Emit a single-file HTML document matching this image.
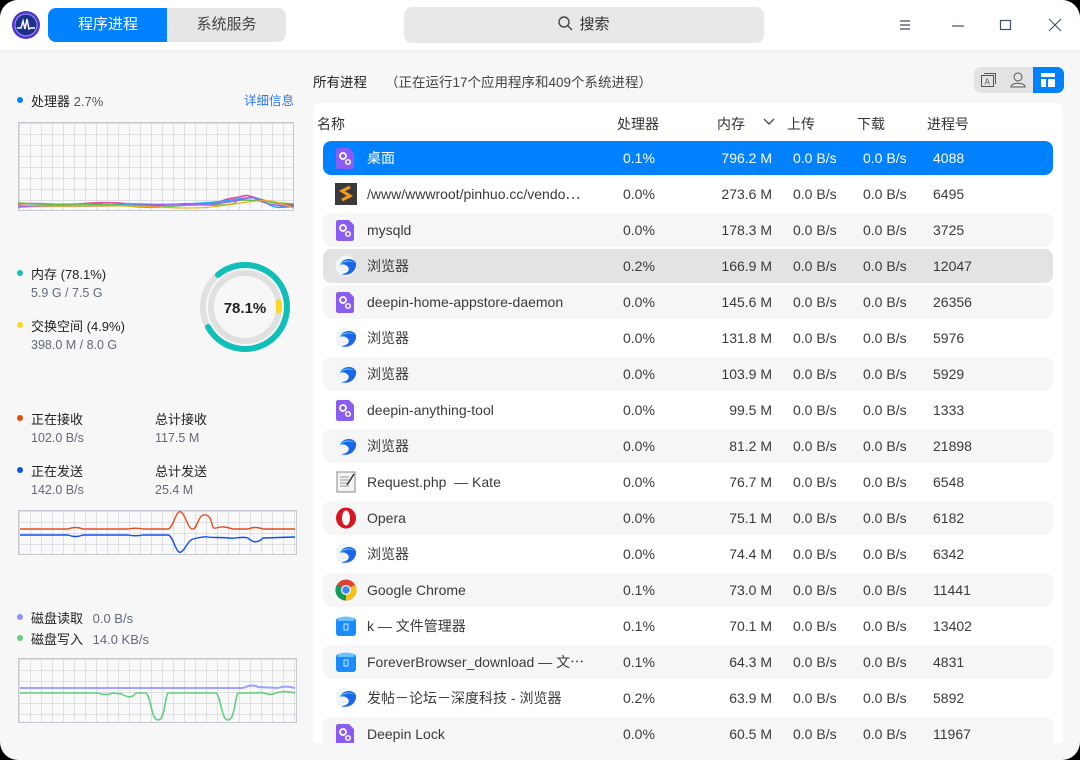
<!DOCTYPE html>
<html><head><meta charset="utf-8"><style>
*{margin:0;padding:0;box-sizing:border-box}
html,body{width:1080px;height:760px;background:#000;overflow:hidden}
body{font-family:"Liberation Sans","Noto Sans CJK SC",sans-serif;font-size:14px;color:#303030}
#win{position:absolute;left:0;top:0;width:1080px;height:760px;background:#f7f7f7;border-radius:18px;overflow:hidden}
#tb{position:absolute;left:0;top:0;width:1080px;height:50px;background:#fff;box-shadow:0 1px 3px rgba(0,0,0,.06)}
.abs{position:absolute}
.tab{position:absolute;top:8px;height:34px;line-height:34px;text-align:center;font-size:15px}
.grid{position:absolute;border:1px solid #c4c9d0;background-color:#f9f9f9;
background-image:linear-gradient(to right,rgba(200,205,212,.55) 1px,transparent 1px),linear-gradient(to bottom,rgba(200,205,212,.55) 1px,transparent 1px);background-size:11px 11px}
.dot{position:absolute;width:6px;height:6px;border-radius:50%}
.lbl{position:absolute;font-size:13px;color:#222}
.sub{position:absolute;font-size:12.5px;color:#606a78}
.row{position:absolute;left:323px;width:730px;height:34px;border-radius:8px;font-size:14px;line-height:34px;color:#3a3a3a}
.row span{position:absolute;white-space:nowrap}
.c1{left:44px}.c2{left:300px}.c3{right:281px}.c4{left:470px}.c5{left:540px}.c6{left:610px}
.ic{position:absolute;left:12px;top:6px;width:22px;height:22px}
.hd{position:absolute;top:114px;font-size:14px;color:#333}
</style></head><body><div id="win">
<div id="tb">
 <svg class="abs" style="left:11px;top:10px" width="30" height="30" viewBox="0 0 30 30"><circle cx="15" cy="15" r="14" fill="#5a2fc8"/><circle cx="15" cy="15" r="11" fill="#1c2f8a" stroke="#8fa0ff" stroke-width="1"/><path d="M6 18 L10 18 L12 11 L14 19 L16 9 L18 19 L20 18 L24 18" stroke="#fff" stroke-width="1.5" fill="none"/></svg>
 <div class="tab" style="left:48px;width:120px;background:#0081ff;color:#fff;border-radius:8px 0 0 8px">程序进程</div>
 <div class="tab" style="left:167px;width:119px;background:#e6e6e6;color:#444;border-radius:0 8px 8px 0">系统服务</div>
 <div class="abs" style="left:404px;top:7px;width:360px;height:36px;background:#e8e8e8;border-radius:8px;text-align:center;line-height:36px;font-size:15px;color:#333">
  <svg style="vertical-align:-2px;margin-right:6px" width="15" height="15" viewBox="0 0 15 15"><circle cx="6" cy="6" r="5" stroke="#444" stroke-width="1.4" fill="none"/><path d="M9.8 9.8 L14 14" stroke="#444" stroke-width="1.4"/></svg>搜索</div>
 <svg class="abs" style="left:898px;top:18px" width="14" height="14"><path d="M2 3H12M2 7H12M2 11H12" stroke="#414d68" stroke-width="1.2"/></svg>
 <svg class="abs" style="left:950px;top:18px" width="16" height="14"><path d="M2 8H14" stroke="#414d68" stroke-width="1.2"/></svg>
 <svg class="abs" style="left:999px;top:18px" width="14" height="14"><rect x="1.5" y="2.5" width="10" height="9" stroke="#414d68" stroke-width="1.2" fill="none"/></svg>
 <svg class="abs" style="left:1048px;top:18px" width="14" height="14"><path d="M1 1L13 13M13 1L1 13" stroke="#414d68" stroke-width="1.1"/></svg>
</div>

<div class="dot" style="left:17px;top:97px;background:#0081ff"></div>
<div class="lbl" style="left:31px;top:91px">处理器 <span style="color:#555">2.7%</span></div>
<div class="abs" style="left:244px;top:90px;font-size:12.5px;color:#2a7be8">详细信息</div>
<div class="grid" style="left:18px;top:122px;width:276px;height:89px"></div>
<svg class="abs" style="left:18px;top:122px" width="276" height="89">
<path d="M0 82 C20 80 40 84 60 82 S100 80 120 83 S160 80 180 82 S200 78 215 76 S225 72 235 75 S255 82 276 83" stroke="#e040a0" stroke-width="1.5" fill="none"/>
<path d="M0 84 C30 82 60 86 90 83 S140 84 170 82 S200 80 220 77 S240 76 250 82 S265 84 276 85" stroke="#20b0e0" stroke-width="1.5" fill="none"/>
<path d="M0 81 C40 84 70 80 110 84 S150 82 190 83 S210 78 225 78 S245 80 276 82" stroke="#60c040" stroke-width="1.5" fill="none"/>
<path d="M0 85 C50 83 80 85 130 83 S180 85 210 80 S230 73 240 78 S260 84 276 84" stroke="#a060f0" stroke-width="1.5" fill="none"/>
<path d="M0 83 C40 86 90 82 140 85 S200 84 230 80 S260 82 276 86" stroke="#f0b020" stroke-width="1.2" fill="none"/>
</svg>

<div class="dot" style="left:17px;top:270px;background:#10c0b8"></div>
<div class="lbl" style="left:31px;top:264px">内存 (78.1%)</div>
<div class="sub" style="left:31px;top:286px">5.9 G / 7.5 G</div>
<div class="dot" style="left:17px;top:322px;background:#f8d820"></div>
<div class="lbl" style="left:31px;top:316px">交换空间 (4.9%)</div>
<div class="sub" style="left:31px;top:338px">398.0 M / 8.0 G</div>
<svg class="abs" style="left:195px;top:257px" width="100" height="100" viewBox="0 0 100 100">
<circle cx="50" cy="50" r="42" stroke="#e0e0e0" stroke-width="6" fill="none"/>
<circle cx="50" cy="50" r="42" stroke="#10c0b8" stroke-width="6" fill="none" stroke-linecap="round" stroke-dasharray="206 264" transform="rotate(-130 50 50)" />
<circle cx="50" cy="50" r="34" stroke="#e0e0e0" stroke-width="6" fill="none"/>
<circle cx="50" cy="50" r="34" stroke="#f8d820" stroke-width="6" fill="none" stroke-linecap="round" stroke-dasharray="8 214" transform="rotate(-8 50 50)"/>
<text x="50" y="56" text-anchor="middle" font-size="15" font-weight="bold" fill="#222" font-family="Liberation Sans">78.1%</text>
</svg>

<div class="dot" style="left:17px;top:415px;background:#e04a10"></div>
<div class="lbl" style="left:31px;top:409px">正在接收</div>
<div class="sub" style="left:31px;top:431px">102.0 B/s</div>
<div class="lbl" style="left:155px;top:409px">总计接收</div>
<div class="sub" style="left:155px;top:431px">117.5 M</div>
<div class="dot" style="left:17px;top:467px;background:#1050f0"></div>
<div class="lbl" style="left:31px;top:461px">正在发送</div>
<div class="sub" style="left:31px;top:483px">142.0 B/s</div>
<div class="lbl" style="left:155px;top:461px">总计发送</div>
<div class="sub" style="left:155px;top:483px">25.4 M</div>
<div class="grid" style="left:18px;top:510px;width:279px;height:45px"></div>
<svg class="abs" style="left:18px;top:510px" width="279" height="45">
<path d="M2 19 L50 19 C55 17 60 17 65 19 L110 19 C115 18 120 18 125 19 L150 19 C155 19 158 -1 163 2 S170 20 175 19 S180 3 188 5 S192 20 198 18 S208 17 215 19 L230 19 C235 17 240 17 245 19 L277 19" stroke="#e05020" stroke-width="1.4" fill="none"/>
<path d="M2 25 L50 25 C55 27 60 27 65 25 L110 25 C115 26 120 26 125 25 L150 25 C155 25 158 45 163 42 S170 30 175 29 S185 26 190 27 S200 27 210 28 S222 26 230 28 C235 33 240 33 245 28 L277 27" stroke="#1050f0" stroke-width="1.4" fill="none"/>
</svg>

<div class="dot" style="left:17px;top:614px;background:#9090ff"></div>
<div class="lbl" style="left:31px;top:608px">磁盘读取 <span style="color:#606a78;margin-left:6px">0.0 B/s</span></div>
<div class="dot" style="left:17px;top:635px;background:#60d080"></div>
<div class="lbl" style="left:31px;top:629px">磁盘写入 <span style="color:#606a78;margin-left:6px">14.0 KB/s</span></div>
<div class="grid" style="left:18px;top:658px;width:279px;height:65px"></div>
<svg class="abs" style="left:18px;top:658px" width="279" height="65">
<path d="M2 30 L225 30 C230 28 235 26 240 29 L260 30 C265 28 270 28 277 30" stroke="#a0a0ff" stroke-width="2" fill="none"/>
<path d="M2 35 L80 35 C85 37 90 37 95 35 L104 36 C110 40 114 40 118 35 L128 35 C133 38 133 62 140 62 C147 62 147 38 150 35 L198 35 C203 38 203 62 210 62 C217 62 217 38 220 35 L240 35 C245 33 250 38 255 36 C262 33 268 33 277 35" stroke="#60d080" stroke-width="1.6" fill="none"/>
</svg>

<div class="abs" style="left:313px;top:71px;font-size:13.5px;color:#222">所有进程<span style="margin-left:18px;color:#444">（正在运行17个应用程序和409个系统进程）</span></div>
<div class="abs" style="left:974px;top:67px;width:90px;height:26px;background:#e3e3e3;border-radius:7px"></div>
<div class="abs" style="left:1033px;top:67px;width:31px;height:26px;background:#0081ff;border-radius:0 7px 7px 0"></div>
<svg class="abs" style="left:980px;top:72px" width="16" height="16"><rect x="1.5" y="3.5" width="12" height="11" stroke="#555" fill="none"/><path d="M4 1.5H15.5V12" stroke="#555" fill="none"/><text x="4.5" y="12.5" font-size="8" fill="#555" font-family="Liberation Sans">A</text></svg>
<svg class="abs" style="left:1009px;top:71px" width="18" height="18"><circle cx="9" cy="6" r="4" stroke="#555" fill="none"/><path d="M2 16 C2 11 16 11 16 16 Z" stroke="#555" fill="none"/></svg>
<svg class="abs" style="left:1040px;top:72px" width="16" height="16"><rect x="1" y="1" width="14" height="4" fill="#fff"/><rect x="1" y="7" width="5" height="8" fill="#fff"/><rect x="8" y="7" width="7" height="8" fill="#fff"/></svg>

<div class="abs" style="left:313px;top:103px;width:750px;height:640px;background:#fff;border-radius:8px 8px 0 0"></div>
<div class="hd" style="left:317px">名称</div>
<div class="hd" style="left:617px">处理器</div>
<div class="hd" style="left:717px">内存</div>
<svg class="abs" style="left:763px;top:117px" width="12" height="10"><path d="M1 2L6 7L11 2" stroke="#444" stroke-width="1.3" fill="none"/></svg>
<div class="hd" style="left:787px">上传</div>
<div class="hd" style="left:857px">下载</div>
<div class="hd" style="left:927px">进程号</div>

<svg width="0" height="0" style="position:absolute"><defs>
<g id="gear"><path d="M3 1H14L19 6V20C19 21 18 22 17 22H3C2 22 1 21 1 20V3C1 2 2 1 3 1Z" fill="#8a5cf0"/><circle cx="8" cy="9" r="3" fill="none" stroke="#fff" stroke-width="1.8"/><circle cx="13" cy="15" r="2.3" fill="none" stroke="#fff" stroke-width="1.5"/></g>
<g id="brw"><circle cx="11" cy="11" r="10.5" fill="#f2f4f8"/><path d="M5 10 C7 3 18 2 21 8 C22 16 14 22 6 19 C13 19 16 14 12 11 C10 9 7 9 5 10Z" fill="#1a66e8"/><path d="M5 10 C7 5 16 4 20 8 C16 6 10 6 5 10Z" fill="#4fc0ff"/></g>
<g id="fm"><rect x="1" y="3" width="20" height="18" rx="3" fill="#1a8cff"/><path d="M3 3 Q11 0 19 3 V6 H3Z" fill="#6cc2ff"/><rect x="9" y="9" width="4" height="6" fill="none" stroke="#cfe8ff" stroke-width="1"/></g>
</defs></svg>

<div class="row" style="top:141px;background:#0081ff;color:#fff"><svg class="ic"><use href="#gear"/></svg><span class="c1">桌面</span><span class="c2">0.1%</span><span class="c3">796.2 M</span><span class="c4">0.0 B/s</span><span class="c5">0.0 B/s</span><span class="c6">4088</span></div>
<div class="row" style="top:177px"><svg class="ic" viewBox="0 0 22 22"><rect x="0" y="0" width="22" height="22" fill="#3a3a3a"/><path d="M15 4 L7 8 L15 13 L7 17" stroke="#f29a1d" stroke-width="3" fill="none"/></svg><span class="c1">/www/wwwroot/pinhuo.cc/vendo⋯</span><span class="c2">0.0%</span><span class="c3">273.6 M</span><span class="c4">0.0 B/s</span><span class="c5">0.0 B/s</span><span class="c6">6495</span></div>
<div class="row" style="top:213px;background:#f6f6f6"><svg class="ic"><use href="#gear"/></svg><span class="c1">mysqld</span><span class="c2">0.0%</span><span class="c3">178.3 M</span><span class="c4">0.0 B/s</span><span class="c5">0.0 B/s</span><span class="c6">3725</span></div>
<div class="row" style="top:249px;background:#e3e3e3"><svg class="ic"><use href="#brw"/></svg><span class="c1">浏览器</span><span class="c2">0.2%</span><span class="c3">166.9 M</span><span class="c4">0.0 B/s</span><span class="c5">0.0 B/s</span><span class="c6">12047</span></div>
<div class="row" style="top:285px;background:#f6f6f6"><svg class="ic"><use href="#gear"/></svg><span class="c1">deepin-home-appstore-daemon</span><span class="c2">0.0%</span><span class="c3">145.6 M</span><span class="c4">0.0 B/s</span><span class="c5">0.0 B/s</span><span class="c6">26356</span></div>
<div class="row" style="top:321px"><svg class="ic"><use href="#brw"/></svg><span class="c1">浏览器</span><span class="c2">0.0%</span><span class="c3">131.8 M</span><span class="c4">0.0 B/s</span><span class="c5">0.0 B/s</span><span class="c6">5976</span></div>
<div class="row" style="top:357px;background:#f6f6f6"><svg class="ic"><use href="#brw"/></svg><span class="c1">浏览器</span><span class="c2">0.0%</span><span class="c3">103.9 M</span><span class="c4">0.0 B/s</span><span class="c5">0.0 B/s</span><span class="c6">5929</span></div>
<div class="row" style="top:393px"><svg class="ic"><use href="#gear"/></svg><span class="c1">deepin-anything-tool</span><span class="c2">0.0%</span><span class="c3">99.5 M</span><span class="c4">0.0 B/s</span><span class="c5">0.0 B/s</span><span class="c6">1333</span></div>
<div class="row" style="top:429px;background:#f6f6f6"><svg class="ic"><use href="#brw"/></svg><span class="c1">浏览器</span><span class="c2">0.0%</span><span class="c3">81.2 M</span><span class="c4">0.0 B/s</span><span class="c5">0.0 B/s</span><span class="c6">21898</span></div>
<div class="row" style="top:465px"><svg class="ic" viewBox="0 0 22 22"><rect x="2" y="1" width="18" height="20" fill="#f4f4f4" stroke="#888"/><path d="M5 6H14M5 9H14M5 12H14M5 15H14" stroke="#999"/><path d="M12 14 L19 3" stroke="#333" stroke-width="1.5"/></svg><span class="c1">Request.php &nbsp;— Kate</span><span class="c2">0.0%</span><span class="c3">76.7 M</span><span class="c4">0.0 B/s</span><span class="c5">0.0 B/s</span><span class="c6">6548</span></div>
<div class="row" style="top:501px;background:#f6f6f6"><svg class="ic" viewBox="0 0 22 22"><ellipse cx="11" cy="11" rx="10" ry="10.5" fill="#d81520"/><ellipse cx="11" cy="11" rx="4" ry="7.5" fill="#fff"/></svg><span class="c1">Opera</span><span class="c2">0.0%</span><span class="c3">75.1 M</span><span class="c4">0.0 B/s</span><span class="c5">0.0 B/s</span><span class="c6">6182</span></div>
<div class="row" style="top:537px"><svg class="ic"><use href="#brw"/></svg><span class="c1">浏览器</span><span class="c2">0.0%</span><span class="c3">74.4 M</span><span class="c4">0.0 B/s</span><span class="c5">0.0 B/s</span><span class="c6">6342</span></div>
<div class="row" style="top:573px;background:#f6f6f6"><svg class="ic" viewBox="0 0 22 22"><circle cx="11" cy="11" r="10.5" fill="#db4437"/><path d="M11 11 L20.1 5.75 A10.5 10.5 0 0 1 11 21.5Z" fill="#f4c20d"/><path d="M11 11 L11 21.5 A10.5 10.5 0 0 1 1.9 5.75Z" fill="#0f9d58"/><circle cx="11" cy="11" r="5" fill="#fff"/><circle cx="11" cy="11" r="3.8" fill="#4285f4"/></svg><span class="c1">Google Chrome</span><span class="c2">0.1%</span><span class="c3">73.0 M</span><span class="c4">0.0 B/s</span><span class="c5">0.0 B/s</span><span class="c6">11441</span></div>
<div class="row" style="top:609px"><svg class="ic"><use href="#fm"/></svg><span class="c1">k — 文件管理器</span><span class="c2">0.1%</span><span class="c3">70.1 M</span><span class="c4">0.0 B/s</span><span class="c5">0.0 B/s</span><span class="c6">13402</span></div>
<div class="row" style="top:645px;background:#f6f6f6"><svg class="ic"><use href="#fm"/></svg><span class="c1">ForeverBrowser_download — 文⋯</span><span class="c2">0.1%</span><span class="c3">64.3 M</span><span class="c4">0.0 B/s</span><span class="c5">0.0 B/s</span><span class="c6">4831</span></div>
<div class="row" style="top:681px"><svg class="ic"><use href="#brw"/></svg><span class="c1">发帖－论坛－深度科技 - 浏览器</span><span class="c2">0.2%</span><span class="c3">63.9 M</span><span class="c4">0.0 B/s</span><span class="c5">0.0 B/s</span><span class="c6">5892</span></div>
<div class="row" style="top:717px;background:#f6f6f6;height:26px;border-radius:8px 8px 0 0"><svg class="ic"><use href="#gear"/></svg><span class="c1">Deepin Lock</span><span class="c2">0.0%</span><span class="c3">60.5 M</span><span class="c4">0.0 B/s</span><span class="c5">0.0 B/s</span><span class="c6">11967</span></div>
<div class="abs" style="left:313px;top:743px;width:750px;height:17px;background:#f7f7f7"></div>
</div></body></html>
